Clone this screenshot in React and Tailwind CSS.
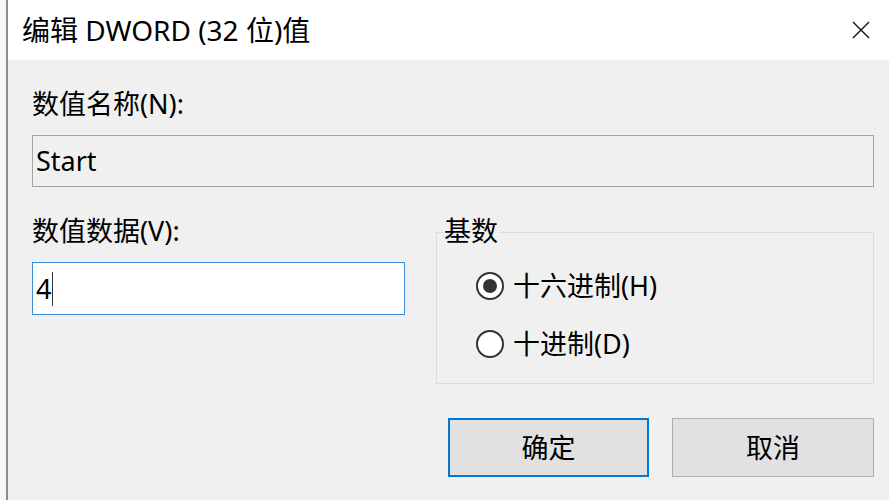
import React from "react";

const font = { fontFamily: '"Noto Sans", "Noto Sans CJK SC", sans-serif' };

function Radio({ checked, label }) {
  return (
    <div className="flex items-center h-[58px]">
      <div className="w-[28px] h-[28px] rounded-full border-2 border-[#333333] bg-white flex items-center justify-center">
        {checked && <div className="w-[14px] h-[14px] rounded-full bg-[#333333]" />}
      </div>
      <span className="ml-[9px] text-[27px] leading-[32px] text-black">{label}</span>
    </div>
  );
}

export default function App() {
  return (
    <div className="w-[889px] h-[500px] flex overflow-hidden bg-[#f7f7f7]" style={font}>
      <div className="w-[6px] bg-[#f7f7f7]" />
      <div className="w-[2px] bg-[#8c8c8c]" />
      <div className="flex-1 flex flex-col">
        <div className="h-[60px] bg-white flex items-center justify-between pl-[14px] pr-[19px]">
          <span className="text-[28px] leading-[32px] text-black">编辑 DWORD (32 位)值</span>
          <svg width="18" height="18" viewBox="0 0 18 18">
            <path d="M1 1 L17 17 M17 1 L1 17" stroke="#111" strokeWidth="1.4" fill="none" />
          </svg>
        </div>
        <div className="flex-1 bg-[#f0f0f0] flex flex-col pl-[24px] pr-[15px] pt-[28px]">
          <div className="text-[27px] leading-[32px] text-black">数值名称(N):</div>
          <div className="mt-[15px] h-[52px] border border-[#a5a5a5] bg-[#f0f0f0] flex items-center pl-[3px]">
            <span className="text-[27px] leading-[32px] text-black">Start</span>
          </div>
          <div className="mt-[28px] flex">
            <div className="w-[373px] flex flex-col">
              <div className="text-[27px] leading-[32px] text-black">数值数据(V):</div>
              <div className="mt-[15px] h-[53px] border border-[#3d8fd9] bg-white flex items-center pl-[3px]">
                <span className="text-[27px] leading-[32px] text-black">4</span>
                <span className="ml-[1px] w-[1px] h-[34px] bg-[#333333]" />
              </div>
            </div>
            <div className="ml-[31px] flex-1 flex flex-col">
              <div className="mt-[17px] h-[152px] border border-[#dcdcdc] relative pl-[39px] pt-[24px]">
                <span className="absolute left-[6px] top-[-18px] px-[1px] bg-[#f0f0f0] text-[27px] leading-[32px] text-black">基数</span>
                <Radio checked label="十六进制(H)" />
                <Radio label="十进制(D)" />
              </div>
            </div>
          </div>
          <div className="mt-[34px] flex justify-end gap-[23px]">
            <div className="w-[201px] h-[59px] bg-[#e1e1e1] border-2 border-[#0078d7] flex items-center justify-center text-[27px] leading-[32px] text-black">确定</div>
            <div className="w-[202px] h-[59px] bg-[#e1e1e1] border border-[#adadad] flex items-center justify-center text-[27px] leading-[32px] text-black">取消</div>
          </div>
        </div>
      </div>
    </div>
  );
}
